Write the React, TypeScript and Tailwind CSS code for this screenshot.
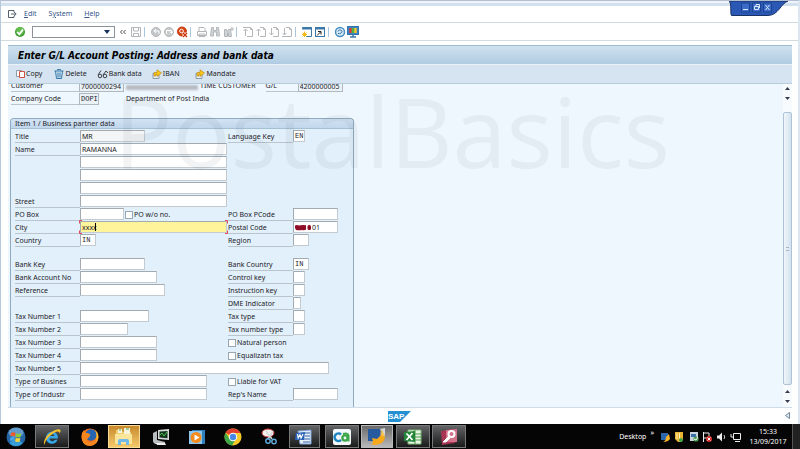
import React from "react";

type Field = { id: string; label: string; value?: string; w: string; tone?: "grey" | "focus" | "mark" };
type Check = { id: string; label: string };
type Row = { left?: Field; right?: Field; check?: Check; extra?: Check; h?: string; gap?: boolean };

const rows: Row[] = [
  { left: { id: "title", label: "Title", value: "MR", w: "w-[65px]", tone: "grey" }, right: { id: "lang", label: "Language Key", value: "EN", w: "w-3" } },
  { left: { id: "name", label: "Name", value: "RAMANNA", w: "w-[147px]" } },
  { left: { id: "name2", label: "", w: "w-[147px]" } },
  { left: { id: "name3", label: "", w: "w-[147px]" } },
  { left: { id: "name4", label: "", w: "w-[147px]" } },
  { left: { id: "street", label: "Street", w: "w-[147px]" } },
  { left: { id: "pobox", label: "PO Box", w: "w-11" }, extra: { id: "powo", label: "PO w/o no." }, right: { id: "pocode", label: "PO Box PCode", w: "w-[45px]" } },
  { left: { id: "city", label: "City", value: "xxxx", w: "w-[147px]", tone: "focus" }, right: { id: "postal", label: "Postal Code", value: "01", w: "w-[45px]", tone: "mark" } },
  { left: { id: "country", label: "Country", value: "IN", w: "w-4" }, right: { id: "region", label: "Region", w: "w-4" } },
  { gap: true },
  { left: { id: "bankkey", label: "Bank Key", w: "w-[65px]" }, right: { id: "bankcountry", label: "Bank Country", value: "IN", w: "w-4" } },
  { left: { id: "bankacc", label: "Bank Account No", w: "w-[77px]" }, right: { id: "control", label: "Control key", w: "w-3" } },
  { left: { id: "reference", label: "Reference", w: "w-[85px]" }, right: { id: "instruction", label: "Instruction key", w: "w-3" } },
  { right: { id: "dme", label: "DME Indicator", w: "w-2" } },
  { left: { id: "tax1", label: "Tax Number 1", w: "w-[69px]" }, right: { id: "taxtype", label: "Tax type", w: "w-3" } },
  { left: { id: "tax2", label: "Tax Number 2", w: "w-12" }, right: { id: "taxnum", label: "Tax number type", w: "w-3" } },
  { left: { id: "tax3", label: "Tax Number 3", w: "w-[77px]" }, check: { id: "natural", label: "Natural person" } },
  { left: { id: "tax4", label: "Tax Number 4", w: "w-[77px]" }, check: { id: "equal", label: "Equalizatn tax" } },
  { left: { id: "tax5", label: "Tax Number 5", w: "w-[249px]" } },
  { left: { id: "busnes", label: "Type of Busines", w: "w-[127px]" }, check: { id: "vat", label: "Liable for VAT" } },
  { left: { id: "industr", label: "Type of Industr", w: "w-[127px]" }, right: { id: "rep", label: "Rep's Name", w: "w-[45px]" } },
];

function Tick({ id, label }: Check) {
  return (
    <span className="flex h-[13px] items-center gap-px">
      <input id={id} type="checkbox" className="size-2 shrink-0 appearance-none border border-[#9aa6b0] bg-white" />
      <label htmlFor={id} className="leading-[13px] whitespace-nowrap">{label}</label>
    </span>
  );
}

function Label({ f }: { f: Field }) {
  return (
    <label htmlFor={f.id} className={"block h-[13px] w-[65px] shrink-0 whitespace-nowrap leading-[13px] " + (f.label ? "border-b border-[#b9c4cc]" : "")}>
      {f.label || <span className="sr-only">{f.id}</span>}
    </label>
  );
}

function Box({ f }: { f: Field }) {
  const tone = f.tone === "focus" ? "bg-[#fff49a]" : f.tone === "grey" ? "bg-[#f3f5f6]" : "bg-white";
  return (
    <span className={"relative flex shrink-0 " + f.w}>
      <input
        id={f.id}
        defaultValue={f.value}
        className={"h-3 w-full min-w-0 border border-[#a3abb1] border-r-[#c4cbd0] border-b-[#c4cbd0] outline-none " + tone + " " + (f.tone === "mark" ? "pl-[18px] " : "pl-px ") + (f.value === "IN" || f.value === "EN" ? "font-['Liberation_Mono',monospace] text-[7px]" : "")}
      />
      {f.tone === "mark" && (
        <svg className="absolute top-[3px] left-px h-[7px] w-[17px]" viewBox="0 0 17 7" fill="#8f0d26">
          <path d="M1 1.500q2-1 4 0 3-1 7-.3v4.500q-2 .8-4 .2-3 .6-6 0-1.500-2-1-4.400z" /><rect x="13.500" y="1" width="3.500" height="5" rx="1.500" />
        </svg>
      )}
      {f.tone === "focus" && (
        <>
          <svg className="absolute -top-px -left-px h-3.5 w-[149px]" viewBox="0 0 149 14" fill="none" stroke="#e0475a">
            <path d="M3 .5H.5V3.500M146 .5h2.500V3.500M.5 10.500v3H3M148.500 10.500v3H146" />
          </svg>
          <span className="absolute top-0.5 left-[15px] h-2 w-px bg-black" />
        </>
      )}
    </span>
  );
}

function FormRow({ r }: { r: Row }) {
  if (r.gap) return <div className="h-[11px]" />;
  return (
    <div className="grid h-[13px] grid-cols-[213px_1fr]">
      <div className="flex">
        {r.left && <><Label f={r.left} /><Box f={r.left} /></>}
        {r.extra && <span className="ml-px flex"><Tick {...r.extra} /></span>}
      </div>
      <div className="flex">
        {r.right && <><Label f={r.right} /><Box f={r.right} /></>}
        {r.check && <Tick {...r.check} />}
      </div>
    </div>
  );
}

const S = ({ children, label }: { children: React.ReactNode; label: string }) => (
  <button aria-label={label} className="size-3 shrink-0">
    <svg viewBox="0 0 12 12" className="size-3" fill="none" stroke="#b4b7ba">{children}</svg>
  </button>
);
const Sep = () => <span className="mr-[3px] h-2.5 w-px shrink-0 bg-[#a9c6dc]" />;
const Page = ({ up, dbl }: { up?: boolean; dbl?: boolean }) => (
  <>
    <path d="M5 1.500h3.500l2 2V10.500H5M8.500 1.500v2h2" />
    <path d={up ? "M3.500 10V3M1.500 5l2-2 2 2" : "M3.500 2v7M1.500 7l2 2 2-2"} />
    {dbl && <path d={up ? "M1 1.500h5" : "M1 10.500h5"} />}
  </>
);

function Toolbar() {
  return (
    <div className="flex h-[18px] items-center border-b border-[#d3dade] pl-[13px]">
      <button aria-label="Enter" className="size-3">
        <svg viewBox="0 0 12 12" className="size-3"><circle cx="6" cy="6" r="5" fill="#3d9e31" /><circle cx="6" cy="5" r="3.800" fill="#68bd50" /><path d="M3.200 6l2.100 2.300L9 3.500" fill="none" stroke="#fff" strokeWidth="1.800" /></svg>
      </button>
      <div className="relative ml-1.5 flex h-3 w-[83px] border border-[#8c9499] bg-white">
        <input aria-label="Command" className="w-full min-w-0 outline-none" />
        <svg viewBox="0 0 6 4" className="absolute top-[3px] right-1 h-1 w-1.5"><path d="M0 0h6L3 4z" fill="#16305c" /></svg>
      </div>
      <button aria-label="Collapse" className="ml-1 size-2"><svg viewBox="0 0 8 8" className="size-2" fill="none" stroke="#555"><path d="M3.500 2L1.500 4l2 2M6.500 2L4.500 4l2 2" /></svg></button>
      <div className="ml-[3px] flex items-center gap-0.5">
        <S label="Save"><path d="M1.500 1.500h9v9h-9zM3.500 1.500V5h5V1.500M3.500 10.500v-3h5v3" /></S>
        <Sep />
        <div className="flex gap-px">
          <S label="Back"><circle cx="6" cy="6" r="4.500" fill="#c5c8ca" /><path d="M9 8V5H4M6 3L4 5l2 2" stroke="#fff" /></S>
          <S label="Exit"><circle cx="6" cy="6" r="4.500" fill="#c9cccd" /><path d="M3.500 8V4.500h5V7M7 5.500L8.500 7.500 10 5.500" stroke="#fff" /></S>
          <S label="Cancel"><circle cx="6" cy="5.500" r="4.500" fill="#d9400f" stroke="#c5380d" /><circle cx="5.500" cy="5" r="1.800" stroke="#fff" /><path d="M7 7l4 4M11 7l-4 4" stroke="#fff" strokeWidth="2.600" /><path d="M7 7l4 4M11 7l-4 4" stroke="#c8320a" strokeWidth="1.200" /></S>
        </div>
        <Sep />
        <div className="flex gap-px">
          <S label="Print"><path d="M3 5V1.500h5l1 1V5M1.500 5.500h9v4h-9zM3 8h6v2.500H3z" /></S>
          <S label="Find"><path d="M2.500 1.500h2v3h3v-3h2L10.500 10h-3V6h-3v4h-3z" fill="#d0d3d5" /></S>
          <S label="Find next"><path d="M2.500 3.500h2l1 2 1-2h2l1 7h-3V7h-1v3.500h-3zM10 1v4M8 3h4" fill="#d0d3d5" /></S>
        </div>
        <Sep />
        <div className="flex gap-px">
          <S label="First page"><Page up dbl /></S>
          <S label="Previous page"><Page up /></S>
          <S label="Next page"><Page /></S>
          <S label="Last page"><Page dbl /></S>
        </div>
        <Sep />
        <div className="flex gap-px">
          <S label="New session"><path d="M1.500 1.500h9v9H5" stroke="#3a79a8" fill="#fff" /><path d="M1 2.500h10" stroke="#3a79a8" strokeWidth="2" /><path d="M3.500 5.500v5.500M1 8.500h5M1.500 6.500l4 4M5.500 6.500l-4 4" stroke="#f4b91c" /></S>
          <S label="Shortcut"><rect x="1.500" y="1.500" width="9" height="9" stroke="#3a79a8" fill="#fff" /><path d="M1 2.500h10" stroke="#3a79a8" strokeWidth="2" /><path d="M3 9.500l3.500-3.500M4 5.500h3v3" stroke="#222" /></S>
        </div>
        <Sep />
        <div className="flex gap-px">
          <S label="Help"><circle cx="6" cy="6" r="4.500" stroke="#4a8fc0" fill="#d7e8f5" strokeWidth="1.500" /><path d="M4 5.500c0-2 4-2 4 0 0 1.500-2 1-2 2.500M4 7.500h1.500" stroke="#2c6fa5" /></S>
          <S label="Layout"><rect x="0.500" y="0.500" width="11" height="8" fill="#3a84c4" stroke="#3175b0" /><path d="M3.500 2v5" stroke="#e8372c" strokeWidth="2.500" /><path d="M6 2v5" stroke="#4db53b" strokeWidth="2.500" /><path d="M8.500 2v5" stroke="#f7c52b" strokeWidth="2.500" /><path d="M6 9v2M3 11h6" stroke="#3a79a8" strokeWidth="1.500" /></S>
        </div>
      </div>
    </div>
  );
}

const Arrow = () => (
  <svg viewBox="0 0 10 10" className="size-2.5"><path d="M1 4.500h6v5H1z" fill="#e8eef2" stroke="#8b9aa6" /><path d="M2 7V3.500h3V.8L9.500 4 5 7.500V5H4v2z" fill="#fbc91c" stroke="#b57d09" strokeWidth=".6" /></svg>
);

const Tri = ({ up }: { up?: boolean }) => (
  <svg viewBox="0 0 5 3" className="h-[3px] w-[5px]"><path d={up ? "M0 3h5L2.500 0z" : "M0 0h5L2.500 3z"} fill="#333c4a" /></svg>
);

function TaskButton({ label, active, children, cls = "" }: { label: string; active?: "dark" | "light" | "gold"; children: React.ReactNode; cls?: string }) {
  const tone =
    active === "dark" ? "border border-[#77797b] bg-gradient-to-b from-[#626466] to-[#1b1b1b]"
    : active === "light" ? "border border-[#b6b8b9] bg-gradient-to-b from-[#6b6b6b] to-[#b9b9b9]"
    : active === "gold" ? "border border-[#f8dd9a] bg-gradient-to-b from-[#c88a2b] to-[#f5ca6b]" : "";
  return (
    <button aria-label={label} className={"flex h-[23px] shrink-0 items-center justify-center " + tone + " " + cls}>
      <svg viewBox="0 0 20 20" className="size-5">{children}</svg>
    </button>
  );
}

function Taskbar() {
  return (
    <footer className="flex h-[25px] items-center bg-[#050505] text-white">
      <TaskButton label="Start" cls="w-8">
        <circle cx="10" cy="10" r="9.500" fill="#2566a5" /><ellipse cx="10" cy="5.500" rx="7.500" ry="5" fill="#7fb2dc" opacity=".7" /><ellipse cx="10" cy="16" rx="6" ry="3" fill="#3fb7ea" opacity=".7" />
        <path d="M5 6q2-1.500 4.500 0L9 9.500Q6.500 8 4.500 9.500z" fill="#ee5b27" /><path d="M10.300 6.200q2.500 1.500 5 0L14.500 10q-2.500 1-4.800-.2z" fill="#8fca3a" /><path d="M4.300 10.500q2-1.500 4.500-.2l-.5 3.900q-2.500-1.500-4.500 0z" fill="#4ba4e8" /><path d="M9.600 10.700q2.500 1.300 4.800 0l-.7 3.800q-2.200 1-4.600-.2z" fill="#fdd43a" />
      </TaskButton>
      <TaskButton label="Internet Explorer" active="dark" cls="ml-[3px] w-[34px]">
        <path d="M15.500 12.500c-1 3-3 4.200-5.500 4.200-3.500 0-6-2.700-6-6s2.500-6 6-6c4 0 6 3 6 6.800H7.500c.2 1.800 1.300 2.800 2.800 2.800 1 0 1.700-.5 2.200-1.300zM7.500 9h5c-.2-1.300-1.200-2-2.400-2S7.800 7.700 7.500 9z" fill="#35a8ea" /><path d="M3 18C.5 16 3 10 8 6S18 1 18.500 3.500c.2 1-.3 2-1 3C17.500 4.500 16 3 11 6.500S2 15 3 18z" fill="#f6c02c" />
      </TaskButton>
      <TaskButton label="Firefox" cls="ml-[3px] w-9">
        <circle cx="10" cy="10" r="8.500" fill="#ee6a1c" /><circle cx="11" cy="8" r="5.800" fill="#2566b4" /><path d="M2 6l2-3 2 3c3 0 5 1 4 3s-3 2-3 4 4 3 6 1c3-1 4-5 4-9 3 5 1 13-6 14S.5 14 2 6z" fill="#f5861f" /><path d="M15 3c4 3 4 9 1 12 1-4 1-8-1-12z" fill="#fcc331" />
      </TaskButton>
      <TaskButton label="Explorer" active="gold" cls="w-8">
        <path d="M2 3h5l2 2h8v12H2z" fill="#efcf72" /><path d="M4 2h4v4H4zM10 1h6v6h-6z" fill="#f8f4dc" /><path d="M1 7h17v10H1z" fill="#fae69a" /><path d="M4 18v-4q0-2 2-2h7q2 0 2 2v4h-3v-3H7v3z" fill="#72b8e6" /><path d="M5 3h2M12 2h3" stroke="#49a349" />
      </TaskButton>
      <TaskButton label="Remote" cls="ml-[3px] w-9">
        <path d="M7 3l11-1v11L7 12z" fill="#d9dbdc" /><path d="M8.500 4.500l8-.5v7.200l-8-.7z" fill="#12361b" /><path d="M9 8l2-2 2 3 3-4" stroke="#4fc154" fill="none" /><path d="M2 6l4-2v9l8 2v2H4l-2-2z" fill="#babdbf" /><path d="M5 16h9l1 2H6z" fill="#eee" />
      </TaskButton>
      <TaskButton label="Media Player" cls="w-9">
        <rect x="5" y="3" width="13" height="14" fill="#2f7fbc" /><rect x="2" y="4" width="13" height="13" fill="#8dc6ec" /><circle cx="9" cy="10.500" r="5.500" fill="#f38a1c" /><path d="M7.500 7.500l5 3-5 3z" fill="#fff" />
      </TaskButton>
      <TaskButton label="Chrome" cls="w-9">
        <circle cx="10" cy="10" r="8.500" fill="#f7c928" /><path d="M10 10L2.600 5.800A8.500 8.500 0 0 1 17.400 6H10z" fill="#e2402f" /><path d="M2.600 5.800A8.500 8.500 0 0 0 9 18.400l3.600-6L10 10 6 11z" fill="#3ea749" /><circle cx="10" cy="10" r="4.200" fill="#fff" /><circle cx="10" cy="10" r="3.200" fill="#4889e8" />
      </TaskButton>
      <TaskButton label="Snipping Tool" cls="w-9">
        <ellipse cx="9" cy="6" rx="6" ry="4" fill="#f4f0ee" stroke="#c7342e" /><path d="M7 4l6 8M14 4l-5 8" stroke="#d5d8da" strokeWidth="1.500" /><circle cx="9" cy="14" r="2.200" fill="none" stroke="#62aede" strokeWidth="1.400" /><circle cx="15" cy="14.500" r="2.200" fill="none" stroke="#62aede" strokeWidth="1.400" />
      </TaskButton>
      <TaskButton label="Word" active="dark" cls="ml-0.5 w-[31px]">
        <path d="M3 4l13-1v14H5z" fill="#eaf0f8" stroke="#7aa1d6" /><path d="M9 6h6M10 9h5M9 12h6M8 15h7" stroke="#3565ac" /><path d="M1 6l9-1-1 8H0z" fill="#2a62b5" /><path d="M2.500 7l.7 4L5 7.500l1 3.500L8 7" stroke="#fff" fill="none" strokeWidth="1.200" />
      </TaskButton>
      <TaskButton label="CA" active="dark" cls="ml-[5px] w-[34px]">
        <rect x="1" y="2" width="18" height="16" rx="2" fill="#f3f7f9" /><path d="M9 7.500A3.800 3.800 0 1 0 9 13" fill="none" stroke="#1b83bf" strokeWidth="2.500" /><circle cx="13" cy="11" r="2.600" fill="none" stroke="#3aa648" strokeWidth="2.300" /><path d="M11 7q5-1.500 5.500 1.500v6" fill="none" stroke="#3aa648" strokeWidth="2" />
      </TaskButton>
      <TaskButton label="SAP Logon" active="light" cls="ml-0.5 w-8">
        <path d="M1 2h12v12H1z" fill="#275a9f" /><path d="M13 2l5-1v8z" fill="#cfd6de" /><path d="M4 18q2-1 2-4l-1-3 5 1 6-6 2 5-1 2q-1 5-13 5z" fill="#f8a91b" /><path d="M15 2l3 8-4-2z" fill="#fbc95a" />
      </TaskButton>
      <TaskButton label="Excel" active="dark" cls="ml-[3px] w-[34px]">
        <path d="M5 3h13v14H5z" fill="#eaf5e8" stroke="#7fba77" /><path d="M5 7h13M5 10h13M5 13h13M12 3v14" stroke="#4b9a45" /><path d="M1 5l11-1v11L1 14z" fill="#24863a" /><path d="M3.500 6.500l6 6.500M9.500 6l-6 7" stroke="#fff" strokeWidth="1.800" />
      </TaskButton>
      <TaskButton label="Access" active="dark" cls="ml-0.5 w-[34px]">
        <path d="M2 4l14-2v14l-13 2z" fill="#a83353" /><path d="M7 3l11-1v13H7z" fill="#d2728b" /><circle cx="12.500" cy="7" r="3" fill="none" stroke="#fff" strokeWidth="2" /><path d="M10 9l-6 6h3l4-4" fill="#fff" stroke="#fff" />
      </TaskButton>
      <div className="ml-auto flex items-center pr-1 text-[7px] leading-3">
        <span>Desktop</span>
        <span className="mb-2 ml-1">»</span>
        <svg viewBox="0 0 82 12" className="ml-1.5 h-3 w-[82px]">
          <path d="M1 2h7v7H1z" fill="#2c66ad" /><path d="M3 11q3-1 3-5l3-3 1 5q-2 3-7 3z" fill="#f9b229" />
          <path d="M15 1h8v7l-2 3h-3l-3-3z" fill="#eab534" /><path d="M17 2v6M19.500 2v6" stroke="#fff0b4" /><circle cx="21" cy="9" r="2" fill="#42a646" />
          <path d="M30 1h8v9h-8z" fill="#c9d4de" /><path d="M31 3h5v3h-5z" fill="#386fa8" /><circle cx="36" cy="8" r="2.600" fill="#4c9c54" /><path d="M34 8l2 1 2-3" stroke="#fff" fill="none" />
          <path d="M43.500 1v10M44 2h5v5h-5" stroke="#eee" fill="none" /><circle cx="49" cy="8" r="3" fill="#db2d2b" /><path d="M47.500 6.500l3 3M50.500 6.500l-3 3" stroke="#fff" />
          <path d="M57 4.500h2l3-3v9l-3-3h-2z" fill="#eee" /><path d="M64 4q1.500 2 0 4" stroke="#ccc" fill="none" />
          <path d="M73.500 2.500h7v6h-7zM71 3v3h3M75 10.500h5" stroke="#eee" fill="none" />
        </svg>
        <span className="ml-1.5 flex w-10 flex-col items-center leading-[10px]"><time>15:33</time><time>13/09/2017</time></span>
      </div>
      <span className="h-full w-2 border-l border-[#555] bg-[#222]" />
    </footer>
  );
}

export default function App() {
  return (
    <div className="flex min-h-screen flex-col overflow-hidden bg-white font-['Noto_Sans',sans-serif] text-[7px] text-[#1d2228]">
      <div className="relative flex flex-1 flex-col border-t border-r-2 border-l border-t-[#b3bfd0] border-r-[#dbe6f0] border-l-[#b9c9da]">
        <div className="h-[5px] border-b-[3px] border-[#d3e0ee] bg-[#eef4f9]" />
        <div className="absolute top-0 right-[10px] h-[15px] w-[59px]">
          <svg viewBox="0 0 59 15" className="absolute h-[15px] w-[59px]"><path d="M0 0h59c-8 3-9 14-20 14.500H2.500C1 14 3 2 0 0z" fill="#2b57b5" stroke="#173263" /><path d="M12.500 2h8v9h-8zM23.500 2h8v9h-8zM34.500 2h8v9h-8z" fill="#3a6bc8" stroke="#1c438f" /><path d="M14 8.500h5M25.500 5.500h4v3h-4zM27 5V3.500h3.500V7M36.500 4l4 5M40.500 4l-4 5" fill="none" stroke="#dbe7fa" /></svg>
          <div className="relative flex h-3 pl-3"><button aria-label="Minimize" className="w-[11px]" /><button aria-label="Restore" className="w-[11px]" /><button aria-label="Close" className="w-[11px]" /></div>
        </div>
        <nav className="flex h-[17px] items-center border-b border-[#d3dade] pl-[7px] text-[#34568a]">
          <button aria-label="Menu"><svg viewBox="0 0 9 9" className="size-[9px]" fill="none" stroke="#56606c"><path d="M6 2V.5H.5v7H6V6M3 4h5M6 2l2.200 2L6 6" /></svg></button>
          <button className="ml-[7px]"><u>E</u>dit</button>
          <button className="ml-3">S<u>y</u>stem</button>
          <button className="ml-3"><u>H</u>elp</button>
        </nav>
        <Toolbar />
        <main className="mt-1 mr-1.5 ml-[7px] flex flex-1 flex-col">
          <h1 className="flex h-[19px] items-center border-t border-[#9fb9cd] bg-gradient-to-b from-[#d0e1ef] to-[#b0cce2] pl-2.5 font-['DejaVu_Sans_Condensed','DejaVu_Sans',sans-serif] text-[10px] font-bold text-black italic">
            Enter G/L Account Posting: Address and bank data
          </h1>
          <div className="flex h-5 items-center border-t border-b border-t-[#eaf3f9] border-b-[#b7cddd] bg-[#d5e4f0] pl-2">
            <button className="flex items-center"><svg viewBox="0 0 10 10" className="size-2.5" fill="#fff"><path d="M.5 1.500h5v6h-5z" stroke="#8b9aa6" /><path d="M3.500 2.500h5v6h-5z" stroke="#d2503f" /></svg>Copy</button>
            <button className="ml-3 flex items-center gap-px"><svg viewBox="0 0 10 10" className="size-2.5" fill="none" stroke="#3279ab"><path d="M.5 2h9M3.500 1.500v-1h3v1M1.500 2l1 7.500h5l1-7.500M4 3.500v5M6 3.500v5" /></svg>Delete</button>
            <button className="ml-2.5 flex items-center"><svg viewBox="0 0 12 10" className="h-2.5 w-3" fill="none" stroke="#3c4248"><circle cx="3" cy="7" r="1.800" /><circle cx="8" cy="7" r="1.800" /><path d="M1 6l3-4.500M6 6L9 2l2 2" /></svg>Bank data</button>
            <button className="ml-2.5 flex items-center gap-px"><Arrow />IBAN</button>
            <button className="ml-4 flex items-center gap-px"><Arrow />Mandate</button>
          </div>
          <div className="relative flex flex-1 overflow-hidden border-b border-[#cfdde8] bg-[#eff7fe]">
            <div className="-mt-1 flex flex-1 flex-col">
              <div className="flex h-[13px] items-start pl-[3px]">
                <label htmlFor="customer" className="h-3 w-[68px] border-b border-[#b9c4cc] leading-3">Customer</label>
                <input id="customer" readOnly defaultValue="7000000294" className="h-3 w-[45px] border border-[#b0b8be] bg-[#eaf2f8] pl-px" />
                <span className="mt-[5px] ml-0.5 h-[5px] w-[72px] bg-[#b5bbc1] blur-[1px]" />
                <span className="ml-0.5 leading-3">TIME CUSTOMER</span>
                <label htmlFor="gl" className="ml-2.5 h-3 w-8 border-b border-[#b9c4cc] leading-3">G/L</label>
                <input id="gl" readOnly defaultValue="4200000005" className="h-3 w-[45px] border border-[#b0b8be] bg-[#eaf2f8] pl-px" />
              </div>
              <div className="flex h-[13px] items-start pl-[3px]">
                <label htmlFor="company" className="h-3 w-[68px] border-b border-[#b9c4cc] leading-3">Company Code</label>
                <input id="company" readOnly defaultValue="DOPI" className="h-3 w-5 border border-[#b0b8be] bg-[#eaf2f8] pl-px font-['Liberation_Mono',monospace]" />
                <span className="ml-[27px] leading-3">Department of Post India</span>
              </div>
              <section className="mt-3 ml-0.5 flex w-[344px] flex-1 flex-col rounded-t-sm border border-b-0 border-[#8eabc1] bg-[#e2f0fb]">
                <h2 className="h-2.5 rounded-t-sm border-b border-[#a5bfd3] bg-gradient-to-b from-[#d3e3f3] to-[#c0d7ed] pl-1 leading-[10px]">Item 1 / Business partner data</h2>
                <div className="pt-px pb-1 pl-1">
                  {rows.map((r, i) => <FormRow key={i} r={r} />)}
                </div>
              </section>
            </div>
            <div className="flex w-[9px] flex-col items-center bg-[#f7fbfe]">
              <div className="flex h-7 flex-col justify-start gap-[7px] pt-[3px]"><Tri up /><Tri /></div>
              <div className="flex w-full flex-1 items-center justify-center rounded-xs border border-[#aec3d6] bg-gradient-to-r from-[#f0f6fb] to-[#d3e2ee]">
                <span className="h-1 w-[3px] border-y border-[#a3b7c8]" />
              </div>
              <div className="flex h-[22px] flex-col justify-center gap-[7px]"><Tri up /><Tri /></div>
            </div>
            <div aria-hidden="true" className="pointer-events-none absolute top-[11px] left-[106px] font-['Open_Sans',sans-serif] text-[97px] leading-[70px] text-[#5b6670]/8">PostalBasics</div>
          </div>
        </main>
        <div className="relative flex h-4 items-center justify-center">
          <svg viewBox="0 0 23 11" className="h-[11px] w-[23px]"><path d="M0 0h23L12 11H0z" fill="#2390d2" /><text x="0" y="8" fontSize="8" fontWeight="700" fill="#fff" fontFamily="Liberation Sans">SAP</text></svg>
          <svg viewBox="0 0 5 7" className="absolute top-1 right-2 h-[7px] w-[5px]"><path d="M4.500.5v6L.5 3.500z" fill="#dfe8ef" stroke="#71879a" /></svg>
        </div>
      </div>
      <Taskbar />
    </div>
  );
}
